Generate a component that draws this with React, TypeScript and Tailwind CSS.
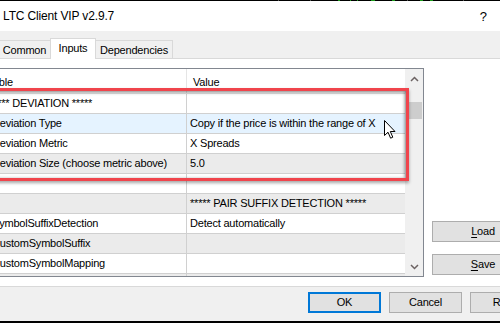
import React from "react";

const rows: { name: string; value: string; nameOffset?: string; bg: string }[] = [
  { name: "***** DEVIATION *****", value: "", nameOffset: "-ml-[11px]", bg: "bg-white" },
  { name: "Deviation Type", value: "Copy if the price is within the range of X", bg: "bg-[#e5f3ff]" },
  { name: "Deviation Metric", value: "X Spreads", bg: "bg-white" },
  { name: "Deviation Size (choose metric above)", value: "5.0", bg: "bg-[#ebebeb]" },
  { name: "", value: "", bg: "bg-white" },
  { name: "", value: "***** PAIR SUFFIX DETECTION *****", bg: "bg-[#ebebeb]" },
  { name: "SymbolSuffixDetection", value: "Detect automatically", bg: "bg-white" },
  { name: "CustomSymbolSuffix", value: "", bg: "bg-[#ebebeb]" },
  { name: "CustomSymbolMapping", value: "", bg: "bg-white" },
  { name: "CustomSymbolPrefix", value: "", bg: "bg-[#ebebeb]" },
];

function Chevron({ up }: { up?: boolean }) {
  return (
    <svg width="9" height="6" viewBox="0 0 9 6">
      <polyline
        points={up ? "1,5 4.5,1.5 8,5" : "1,1 4.5,4.5 8,1"}
        fill="none"
        stroke="#6b6262"
        strokeWidth="1.5"
      />
    </svg>
  );
}

export default function App() {
  return (
    <div className="relative w-[500px] h-[323px] overflow-hidden bg-[#f0f0f0] text-black font-['Liberation_Sans',Arial,sans-serif] text-[11px] tracking-[-0.2px] leading-none">
      {/* top strip of chart behind */}
      <div className="relative h-px bg-black">
        <div className="absolute top-0 left-[278px] w-px h-px bg-[#555]" />
        <div className="absolute top-0 left-[310px] w-px h-px bg-[#555]" />
        <div className="absolute top-0 left-[338px] w-[2px] h-px bg-[#1a9a1a]" />
        <div className="absolute top-0 left-[350px] w-px h-px bg-[#1a9a1a]" />
        <div className="absolute top-0 left-[357px] w-px h-px bg-[#1a9a1a]" />
        <div className="absolute top-0 left-[371px] w-[4px] h-px bg-[#1a9a1a]" />
        <div className="absolute top-0 left-[392px] w-[3px] h-px bg-[#1a9a1a]" />
        <div className="absolute top-0 left-[407px] w-px h-px bg-[#555]" />
        <div className="absolute top-0 left-[420px] w-[3px] h-px bg-[#1a9a1a]" />
        <div className="absolute top-0 left-[430px] w-[3px] h-px bg-[#1a9a1a]" />
        <div className="absolute top-0 left-[463px] w-px h-px bg-[#555]" />
      </div>

      {/* title bar */}
      <div className="h-[30px] bg-white flex items-center justify-between pl-[3px] pr-[13px]">
        <span className="text-[12px] tracking-[-0.15px]">LTC Client VIP v2.9.7</span>
        <span className="text-[13px] tracking-normal">?</span>
      </div>

      {/* tabs */}
      <div className="h-[27px] flex items-end -ml-[2px]">
        <div className="h-[18px] w-[53px] border border-b-0 border-[#d9d9d9] bg-[#f0f0f0] flex items-center justify-center pt-px">
          Common
        </div>
        <div className="relative z-10 -ml-px -mb-px h-[21px] w-[46px] border border-b-0 border-[#d9d9d9] bg-white flex items-center justify-center pb-[2px]">
          Inputs
        </div>
        <div className="-ml-px h-[18px] w-[78px] border border-b-0 border-[#d9d9d9] bg-[#f0f0f0] flex items-center justify-center pt-px">
          Dependencies
        </div>
      </div>

      {/* tab page */}
      <div className="h-[229px] bg-white border-t border-b border-[#d9d9d9]">
        <div className="flex mt-[9px]">
          {/* grid */}
          <div className="w-[424px] h-[209px] border-t border-b border-r border-[#828790] flex">
            <div className="w-[405px] h-[207px] overflow-hidden flex flex-col">
              {/* header */}
              <div className="h-[25px] shrink-0 flex border-b border-[#e5e5e5] bg-white">
                <div className="w-[187px] border-r border-[#e5e5e5] overflow-hidden flex items-center pt-[2px]">
                  <span className="-ml-[25px] whitespace-nowrap">Variable</span>
                </div>
                <div className="flex-1 flex items-center pl-[6px] pt-[2px]">Value</div>
              </div>
              {rows.map((r, i) => (
                <div key={i} className={`h-[20px] shrink-0 flex border-b border-[#d0d0d0] ${r.bg}`}>
                  <div className="w-[187px] border-r border-[#d0d0d0] overflow-hidden flex items-center">
                    <span className={`${r.nameOffset ?? "-ml-[8px]"} whitespace-nowrap`}>{r.name}</span>
                  </div>
                  <div className="flex-1 overflow-hidden flex items-center pl-[3px] whitespace-nowrap">{r.value}</div>
                </div>
              ))}
            </div>
            {/* scrollbar */}
            <div className="w-[18px] h-[207px] bg-[#f0f0f0] flex flex-col">
              <div className="h-[20px] flex items-center justify-center pl-px">
                <Chevron up />
              </div>
              <div className="flex-1 pt-[13px] pl-[2px] pr-[1px]">
                <div className="h-[17px] bg-[#cdcdcd]" />
              </div>
              <div className="h-[18px] flex items-center justify-center pl-px">
                <Chevron />
              </div>
            </div>
          </div>

          {/* side buttons */}
          <div className="ml-[8px] pt-[153px] flex flex-col gap-[12px]">
            <div className="w-[102px] h-[21px] bg-[#e1e1e1] border border-[#adadad] flex items-center justify-center">
              <span>
                <span className="underline underline-offset-2">L</span>oad
              </span>
            </div>
            <div className="w-[102px] h-[21px] bg-[#e1e1e1] border border-[#adadad] flex items-center justify-center">
              <span>
                <span className="underline underline-offset-2">S</span>ave
              </span>
            </div>
          </div>
        </div>
      </div>

      {/* bottom buttons */}
      <div className="h-[34px] pt-[5px] pl-[308px] flex gap-[8px]">
        <div className="shrink-0 w-[73px] h-[21px] bg-[#e1e1e1] border-2 border-[#0078d7] flex items-center justify-center">OK</div>
        <div className="shrink-0 w-[73px] h-[21px] bg-[#e1e1e1] border border-[#adadad] flex items-center justify-center">Cancel</div>
        <div className="shrink-0 w-[73px] h-[21px] bg-[#e1e1e1] border border-[#adadad] flex items-center justify-center">Reset</div>
      </div>
      <div className="h-[2px] bg-black" />

      {/* red highlight rectangle */}
      <div className="absolute left-[-10px] top-[88px] w-[419px] h-[93px] border-[3px] border-[#f0444c] shadow-[0_2px_3px_rgba(0,0,0,0.35),inset_0_2px_3px_rgba(0,0,0,0.3),inset_-2px_0_3px_rgba(0,0,0,0.25)]" />

      {/* mouse cursor */}
      <svg className="absolute left-[384px] top-[120px]" width="13" height="20" viewBox="0 0 13 20">
        <path
          d="M0.5 0.5 L0.5 15.5 L4 12.2 L6.6 18.2 L8.8 17.2 L6.3 11.5 L11 11.5 Z"
          fill="#fff"
          stroke="#000"
          strokeWidth="1"
          strokeLinejoin="miter"
        />
      </svg>
    </div>
  );
}
